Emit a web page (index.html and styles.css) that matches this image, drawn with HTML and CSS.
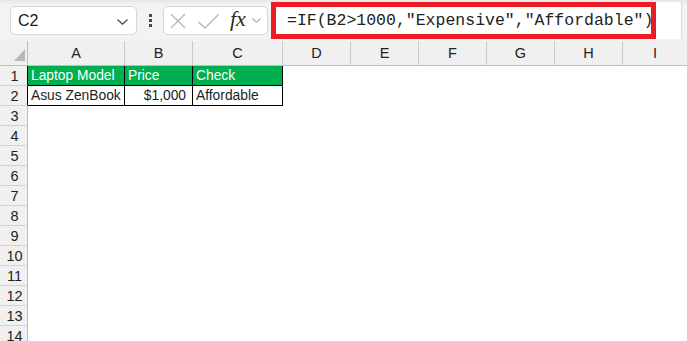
FILE: index.html
```html
<!DOCTYPE html>
<html>
<head>
<meta charset="utf-8">
<link rel="stylesheet" href="styles.css">
</head>
<body>
<div class="toolbar">
  <div class="namebox">
    <span class="name">C2</span>
    <svg class="chev" width="11" height="6" viewBox="0 0 11 6"><path d="M0.5 0.5 L5.5 5.2 L10.5 0.5" fill="none" stroke="#444" stroke-width="1.2"/></svg>
  </div>
  <div class="dots"><i></i><i></i><i></i></div>
  <div class="fxbox">
    <svg width="16" height="16" viewBox="0 0 16 16"><path d="M1 1 L15 15 M15 1 L1 15" stroke="#b4b4b4" stroke-width="1.3" fill="none"/></svg>
    <svg width="21" height="15" viewBox="0 0 21 15"><path d="M0.5 8 L7 14 L20.5 0.5" stroke="#b4b4b4" stroke-width="1.3" fill="none"/></svg>
    <span class="fx">fx</span>
    <svg width="9" height="5" viewBox="0 0 9 5"><path d="M0.5 0.5 L4.5 4.3 L8.5 0.5" fill="none" stroke="#a8a8a8" stroke-width="1.1"/></svg>
  </div>
  <div class="formula">
    <div class="highlight">=IF(B2&gt;1000,"Expensive","Affordable")</div>
  </div>
</div>
<div class="sheet">
  <div class="corner"><span class="tri"></span></div>
  <div class="ch">A</div><div class="ch">B</div><div class="ch">C</div><div class="ch">D</div><div class="ch">E</div><div class="ch">F</div><div class="ch">G</div><div class="ch">H</div><div class="ch last">I</div>

  <div class="rh dark">1</div>
  <div class="c t g">Laptop Model</div><div class="c t g">Price</div><div class="c t g">Check</div>
  <div class="c"></div><div class="c"></div><div class="c"></div><div class="c"></div><div class="c"></div><div class="c"></div>

  <div class="rh dark">2</div>
  <div class="c t">Asus ZenBook</div><div class="c t num">$1,000</div><div class="c t">Affordable</div>
  <div class="c"></div><div class="c"></div><div class="c"></div><div class="c"></div><div class="c"></div><div class="c"></div>

  <div class="rh">3</div><div class="row"></div>
  <div class="rh">4</div><div class="row"></div>
  <div class="rh">5</div><div class="row"></div>
  <div class="rh">6</div><div class="row"></div>
  <div class="rh">7</div><div class="row"></div>
  <div class="rh">8</div><div class="row"></div>
  <div class="rh">9</div><div class="row"></div>
  <div class="rh">10</div><div class="row"></div>
  <div class="rh">11</div><div class="row"></div>
  <div class="rh">12</div><div class="row"></div>
  <div class="rh">13</div><div class="row"></div>
  <div class="rh">14</div><div class="row"></div>
</div>
</body>
</html>
```
FILE: styles.css
```css
* { box-sizing: border-box; }
html, body { margin: 0; padding: 0; background: #fff; overflow: hidden; }
body { width: 687px; height: 341px; font-family: "Liberation Sans", Arial, sans-serif; color: #1e1e1e; }

.toolbar {
  height: 41px;
  background: linear-gradient(#e6e6e6 0px, #f3f3f3 5px, #f3f3f3 100%);
  display: flex;
  align-items: center;
  padding-left: 10px;
}
.namebox {
  width: 127px;
  height: 29px;
  background: #fff;
  border: 1px solid #d6d6d6;
  border-radius: 5px;
  display: flex;
  align-items: center;
  justify-content: space-between;
  padding: 0 8px 0 7px;
}
.name { font-family: "Liberation Sans", sans-serif; font-size: 16px; color: #1a1a1a; }
.chev { margin-top: 2px; }
.dots {
  width: 26px;
  display: flex;
  flex-direction: column;
  align-items: center;
  gap: 2px;
}
.dots i { display: block; width: 3px; height: 3px; background: #4a4a4a; }
.fxbox {
  width: 105px;
  height: 29px;
  background: #fff;
  border: 1px solid #d6d6d6;
  border-radius: 5px;
  display: flex;
  align-items: center;
  padding-left: 6px;
  gap: 0;
}
.fxbox svg:nth-child(1) { margin-right: 12px; }
.fxbox svg:nth-child(2) { margin-right: 11px; margin-top: 1px; }
.fx {
  font-family: "Liberation Serif", "DejaVu Serif", serif;
  font-style: italic;
  font-size: 22px;
  color: #2a2a2a;
  letter-spacing: 0px;
  margin-right: 6px;
  margin-top: -3px;
}
.formula {
  flex: 1;
  margin-left: 3px;
  margin-right: 5px;
  height: 37px;
  background: #fff;
  border-right: 1px solid #d6d6d6;
}
.highlight {
  width: 385px;
  height: 37px;
  border: 5px solid #ec1c24;
  display: flex;
  align-items: center;
  padding-left: 11px;
  font-family: "Liberation Mono", "DejaVu Sans Mono", monospace;
  font-size: 16.5px;
  color: #222;
  white-space: nowrap;
}

.sheet {
  display: grid;
  grid-template-columns: 28px 97px 68px 90px 68px 68px 68px 68px 68px 64px;
  grid-template-rows: 25px repeat(14, 20px);
}
.corner {
  background: #f0f0f0;
  border-right: 1px solid #bdbdbd;
  border-bottom: 1px solid #bdbdbd;
  position: relative;
}
.tri {
  position: absolute;
  left: 14px;
  top: 8px;
  width: 0;
  height: 0;
  border-left: 11px solid transparent;
  border-bottom: 12px solid #b8b8b8;
}
.ch {
  background: #f0f0f0;
  border-bottom: 1px solid #bdbdbd;
  border-right: 1px solid #c9c9c9;
  font-size: 14.5px;
  display: flex;
  align-items: flex-end;
  justify-content: center;
  padding-bottom: 4px;
  color: #222;
}
.ch.last { border-right: none; }
.rh {
  grid-column: 1;
  background: #f0f0f0;
  border-right: 1px solid #bdbdbd;
  border-bottom: 1px solid #d2d2d2;
  font-size: 14.5px;
  display: flex;
  align-items: center;
  justify-content: center;
  padding-left: 2px;
  color: #222;
}
.rh.dark { border-right-color: #000; }
.row { grid-column: 2 / -1; }
.c {
  font-size: 13.8px;
  display: flex;
  align-items: center;
  padding: 0 2px 0 3px;
  white-space: nowrap;
  overflow: hidden;
}
.c.t { border-right: 1px solid #000; border-bottom: 1px solid #000; }
.c.g { background: #00b050; color: #fff; }
.c.num { justify-content: flex-end; padding-right: 6px; }
```
